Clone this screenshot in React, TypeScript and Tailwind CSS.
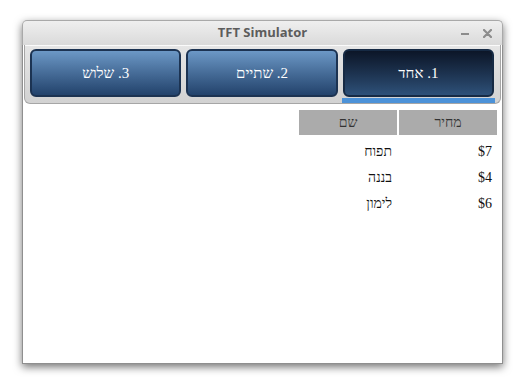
const tabs = [
  { label: "1. אחד", active: true },
  { label: "2. שתיים", active: false },
  { label: "3. שלוש", active: false },
];

const rows = [
  { price: "$7", name: "תפוח" },
  { price: "$4", name: "בננה" },
  { price: "$6", name: "לימון" },
];

function TitleBar() {
  return (
    <div className="relative flex h-[25px] items-center justify-center rounded-t-[5px] border border-b-0 border-[#a9a9a9] bg-gradient-to-b from-[#efefef] to-[#dadada]">
      <span className="font-['Open_Sans',sans-serif] text-[13px] font-bold text-[#5c5c5c]">
        TFT Simulator
      </span>
      <div className="absolute right-[10px] top-0 flex h-full items-center gap-[14px]">
        <span className="mt-[1px] block h-[2px] w-[8px] bg-[#8c8c8c]" />
        <svg width="9" height="9" viewBox="0 0 9 9">
          <path d="M1 1L8 8M8 1L1 8" stroke="#8c8c8c" strokeWidth="2.2" strokeLinecap="round" />
        </svg>
      </div>
    </div>
  );
}

function TabStrip() {
  return (
    <div className="mx-[1px] flex h-[59px] gap-[5px] rounded-b-[6px] border border-t-0 border-[#a6a6a6] bg-gradient-to-b from-[#e6e6e6] to-[#d2d2d2] pl-[5px] pr-[6px] pt-[4px] shadow-[inset_0_1px_0_#fafafa]" dir="rtl">
      {tabs.map((tab) => (
        <div key={tab.label} className="flex w-[152px] flex-col">
          <div
            className={
              tab.active
                ? "flex h-[48px] items-center justify-center rounded-[6px] border-2 border-[#162a44] bg-gradient-to-b from-[#0c1628] to-[#2e5179] text-white"
                : "flex h-[48px] items-center justify-center rounded-[6px] border-2 border-[#1c3352] bg-gradient-to-b from-[#6c98c6] to-[#23436c] text-white"
            }
          >
            <span className="font-['Liberation_Serif',serif] text-[15px]">{tab.label}</span>
          </div>
          {tab.active && <div className="ml-[-1px] mr-[-1px] mt-[1px] h-[5px] bg-[#4c92d8]" />}
        </div>
      ))}
    </div>
  );
}

function PriceTable() {
  return (
    <div className="mt-[6px] flex justify-start pr-[5px] font-['Liberation_Serif',serif] text-[14px] text-[#111]" dir="rtl">
      <div className="flex flex-col">
        <div className="flex h-[25px] gap-[2px] text-[#333]">
          <div className="flex w-[98px] items-center justify-center bg-[#ababab]">מחיר</div>
          <div className="flex w-[98px] items-center justify-center bg-[#ababab]">שם</div>
        </div>
        <div className="mt-[3px] flex flex-col">
          {rows.map((row) => (
            <div key={row.name} className="flex h-[26px] gap-[2px]">
              <div className="flex w-[98px] items-center pr-[5px]" dir="ltr">
                <span className="ml-auto">{row.price}</span>
              </div>
              <div className="flex w-[98px] items-center pr-[5px]">{row.name}</div>
            </div>
          ))}
        </div>
      </div>
    </div>
  );
}

export default function App() {
  return (
    <div className="h-[389px] w-[529px] overflow-hidden bg-white pl-[22px] pt-[20px]">
      <div className="flex h-[344px] w-[481px] flex-col rounded-t-[5px] shadow-[0_3px_8px_rgba(0,0,0,0.55)]">
        <TitleBar />
        <div className="flex flex-1 flex-col border-x border-b border-[#8f8f8f] bg-white">
          <TabStrip />
          <PriceTable />
        </div>
      </div>
    </div>
  );
}
